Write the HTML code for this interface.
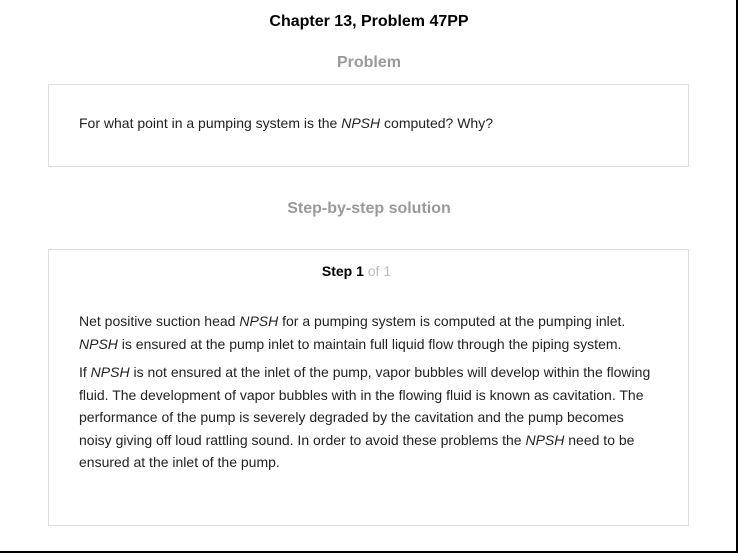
<!DOCTYPE html>
<html><head><style>
html,body{margin:0;padding:0;}
body{width:738px;height:553px;position:relative;background:#fff;font-family:"Liberation Sans",Arial,sans-serif;overflow:hidden;}
.frame{position:absolute;left:0;top:0;width:736px;height:551px;border-right:2px solid #000;border-bottom:2px solid #000;}
.t{position:absolute;left:0;width:738px;text-align:center;font-weight:bold;}
.box{position:absolute;left:48px;width:639px;border:1px solid #ddd;}
p{margin:0;font-size:14px;color:#222;}
</style></head><body>
<div class="frame"></div>
<div class="t" style="top:54px;font-size:16px;color:#999">Problem</div>
<div class="t" style="top:13px;font-size:16px;color:#000">Chapter 13, Problem 47PP</div>
<div class="box" style="top:84px;height:81px">
<p style="position:absolute;left:30px;top:30px">For what point in a pumping system is the <i>NPSH</i> computed? Why?</p>
</div>
<div class="t" style="top:200px;font-size:16px;color:#999">Step-by-step solution</div>
<div class="box" style="top:249px;height:275px">
<div style="position:absolute;left:0;width:639px;top:13px;text-align:center;font-size:14px;padding-right:24px;box-sizing:border-box"><b>Step 1</b> <span style="color:#bbb">of 1</span></div>
<div style="position:absolute;left:30px;top:60px;width:576px;line-height:22.5px">
<p>Net positive suction head <i>NPSH</i> for a pumping system is computed at the pumping inlet. <i>NPSH</i> is ensured at the pump inlet to maintain full liquid flow through the piping system.</p>
<p style="margin-top:6px">If <i>NPSH</i> is not ensured at the inlet of the pump, vapor bubbles will develop within the flowing fluid. The development of vapor bubbles with in the flowing fluid is known as cavitation. The performance of the pump is severely degraded by the cavitation and the pump becomes noisy giving off loud rattling sound. In order to avoid these problems the <i>NPSH</i> need to be ensured at the inlet of the pump.</p>
</div>
</div>
</body></html>
